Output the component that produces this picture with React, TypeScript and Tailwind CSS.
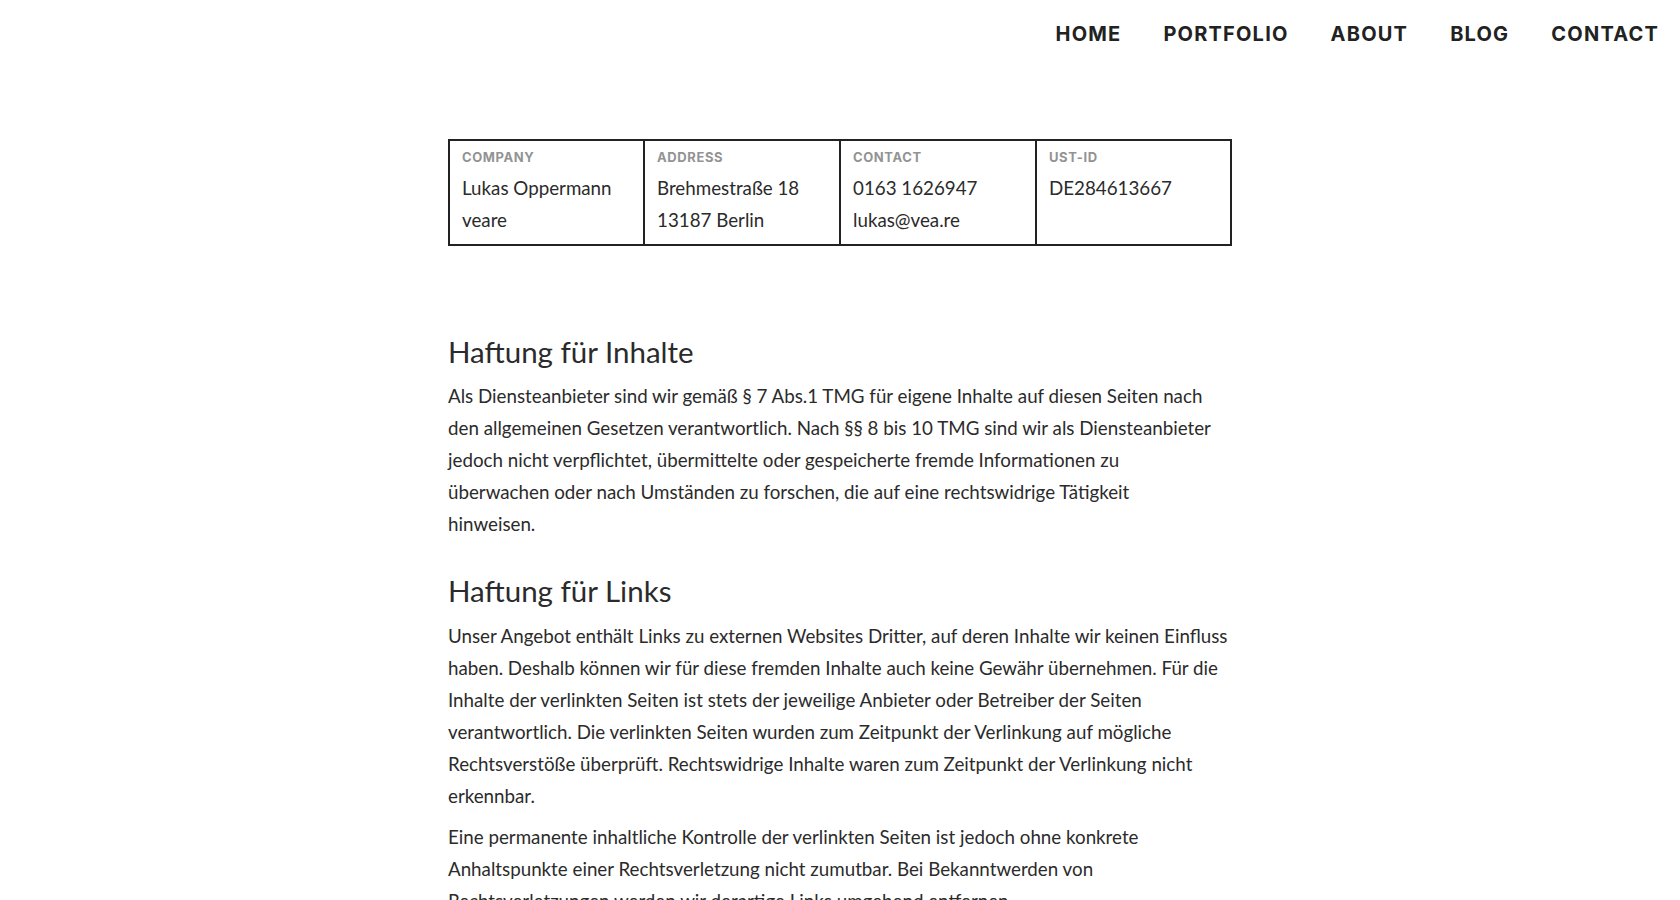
import React from "react";

const nav = ["HOME", "PORTFOLIO", "ABOUT", "BLOG", "CONTACT"];

const info = [
  { label: "COMPANY", lines: ["Lukas Oppermann", "veare"] },
  { label: "ADDRESS", lines: ["Brehmestraße 18", "13187 Berlin"] },
  { label: "CONTACT", lines: ["0163 1626947", "lukas@vea.re"] },
  { label: "UST-ID", lines: ["DE284613667"] },
];

export default function App() {
  return (
    <div className="min-h-screen bg-white font-['Lato',sans-serif] text-[#2b2b2b]">
      {/* header */}
      <header className="flex justify-end pt-[22px]">
        <nav className="flex">
          {nav.map((item) => (
            <a
              key={item}
              href="#"
              className="px-[21px] font-['Inter',sans-serif] text-[20px] font-bold leading-6 tracking-[1.2px] text-[#222]"
            >
              {item}
            </a>
          ))}
        </nav>
      </header>

      <main className="mx-auto w-[784px] pt-[93px]">
        {/* imprint table */}
        <div className="grid grid-cols-[195px_196px_196px_1fr] border-2 border-[#222]">
          {info.map((col, i) => (
            <div
              key={col.label}
              className={
                i < 3
                  ? "border-r-2 border-[#222] px-3 pt-2 pb-2"
                  : "px-3 pt-2 pb-2"
              }
            >
              <p className="mb-[7px] font-['Inter',sans-serif] text-[13px] font-bold leading-4 tracking-[0.6px] text-[#939393]">
                {col.label}
              </p>
              {col.lines.map((l) => (
                <p key={l} className="text-[18.75px] leading-8">
                  {l}
                </p>
              ))}
            </div>
          ))}
        </div>

        <section className="mt-[88px]">
          <h2 className="text-[29.5px] leading-[1.2]">Haftung für Inhalte</h2>
          <p className="mt-[11px] text-[18.75px] leading-8">
            Als Diensteanbieter sind wir gemäß § 7 Abs.1 TMG für eigene Inhalte
            auf diesen Seiten nach
            <br />
            den allgemeinen Gesetzen verantwortlich. Nach §§ 8 bis 10 TMG sind
            wir als Diensteanbieter
            <br />
            jedoch nicht verpflichtet, übermittelte oder gespeicherte fremde
            Informationen zu
            <br />
            überwachen oder nach Umständen zu forschen, die auf eine
            rechtswidrige Tätigkeit
            <br />
            hinweisen.
          </p>
        </section>

        <section className="mt-[33px] pb-20">
          <h2 className="text-[29.5px] leading-[1.2]">Haftung für Links</h2>
          <p className="mt-[11px] text-[18.75px] leading-8">
            Unser Angebot enthält Links zu externen Websites Dritter, auf deren
            Inhalte wir keinen Einfluss haben. Deshalb können wir für diese
            fremden Inhalte auch keine Gewähr übernehmen. Für die Inhalte der
            verlinkten Seiten ist stets der jeweilige Anbieter oder Betreiber der
            Seiten verantwortlich. Die verlinkten Seiten wurden zum Zeitpunkt der
            Verlinkung auf mögliche Rechtsverstöße überprüft. Rechtswidrige
            Inhalte waren zum Zeitpunkt der Verlinkung nicht erkennbar.
          </p>
          <p className="mt-[9px] text-[18.75px] leading-8">
            Eine permanente inhaltliche Kontrolle der verlinkten Seiten ist
            jedoch ohne konkrete Anhaltspunkte einer Rechtsverletzung nicht
            zumutbar. Bei Bekanntwerden von Rechtsverletzungen werden wir
            derartige Links umgehend entfernen.
          </p>
        </section>
      </main>
    </div>
  );
}
